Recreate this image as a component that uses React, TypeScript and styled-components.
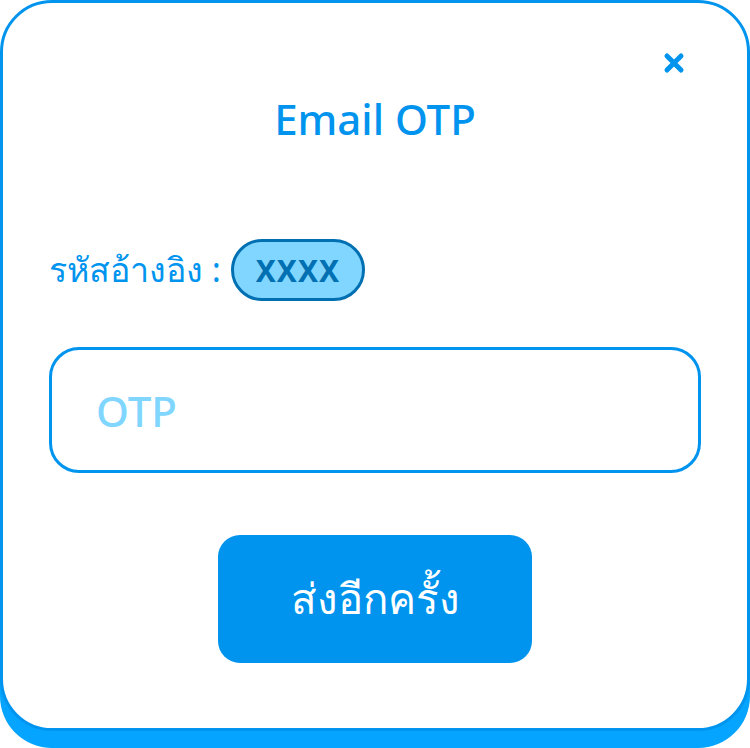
import styled, { createGlobalStyle } from 'styled-components'

const GlobalStyle = createGlobalStyle`
    html, body {
        margin: 0;
        padding: 0;
        background: #fff;
    }
    * {
        box-sizing: border-box;
    }
`

const Page = styled.div`
    width: 750px;
    height: 748px;
`

const Card = styled.div`
    position: relative;
    width: 750px;
    height: 731px;
    background: #fff;
    border: 3px solid #0094ee;
    border-radius: 52px;
    box-shadow: 0 17px 0 #04a4ff;
    font-family: 'Noto Sans', 'Open Sans', sans-serif;
    display: flex;
    flex-direction: column;
    padding: 0 46px;
`

const CloseBtn = styled.button`
    position: absolute;
    top: 47px;
    right: 60px;
    width: 26px;
    height: 26px;
    border: none;
    background: none;
    padding: 0;
    cursor: pointer;
`

const Title = styled.h1`
    margin: 90px 0 0 0;
    text-align: center;
    font-size: 42px;
    line-height: 52px;
    font-weight: 500;
    color: #0094ee;
`

const RefRow = styled.div`
    display: flex;
    align-items: center;
    gap: 10px;
    margin-top: 94px;
`

const RefLabel = styled.span`
    font-size: 34px;
    color: #0094ee;
`

const RefPill = styled.span`
    display: flex;
    align-items: center;
    justify-content: center;
    width: 134px;
    height: 62px;
    border-radius: 31px;
    background: #80d6ff;
    border: 3px solid #0070b2;
    color: #0070b2;
    font-size: 30px;
    font-weight: 700;
    letter-spacing: 1px;
`

const OtpInput = styled.input`
    margin-top: 46px;
    width: 652px;
    height: 126px;
    border: 3px solid #0094ee;
    border-radius: 30px;
    padding: 0 44px;
    font-family: inherit;
    font-size: 42px;
    font-weight: 500;
    color: #0070b2;
    outline: none;
    &::placeholder {
        color: #80d6ff;
    }
`

const ResendBtn = styled.button`
    align-self: center;
    margin-top: 62px;
    width: 314px;
    height: 128px;
    border: none;
    border-radius: 22px;
    background: #0094ee;
    color: #fff;
    font-family: inherit;
    font-size: 42px;
    cursor: pointer;
`

const closeIcon = (
    <svg width="26" height="26" viewBox="0 0 26 26">
        <path
            d="M6 6 L20 20 M20 6 L6 20"
            stroke="#0094ee"
            strokeWidth="5"
            strokeLinecap="round"
        />
    </svg>
)

export default function App() {
    return (
        <Page>
            <GlobalStyle />
            <Card>
                <CloseBtn aria-label="close">{closeIcon}</CloseBtn>
                <Title>Email OTP</Title>
                <RefRow>
                    <RefLabel>รหัสอ้างอิง :</RefLabel>
                    <RefPill>XXXX</RefPill>
                </RefRow>
                <OtpInput placeholder="OTP" />
                <ResendBtn>ส่งอีกครั้ง</ResendBtn>
            </Card>
        </Page>
    )
}
